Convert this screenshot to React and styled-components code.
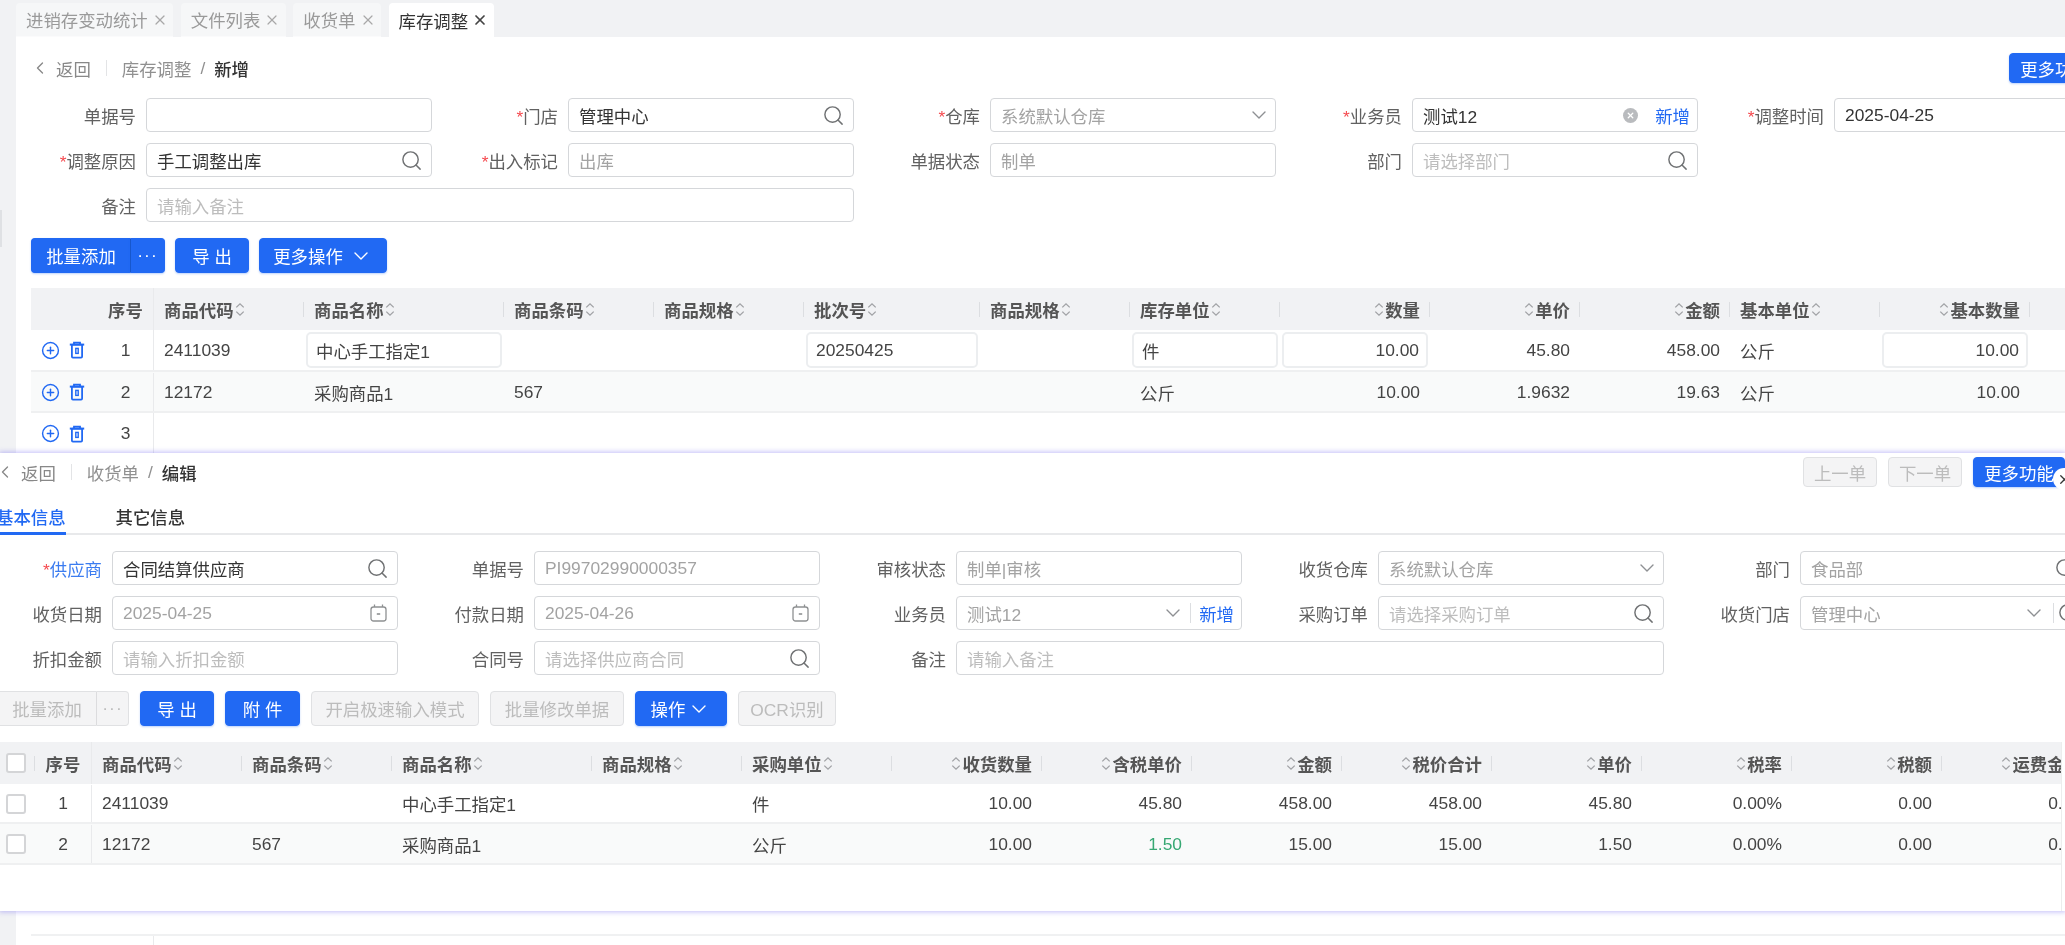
import styled, { createGlobalStyle } from 'styled-components'
import { ChevronLeft, ChevronDown, CirclePlus, Search, X } from 'lucide-react'

const BLUE = '#2169f3'

const Global = createGlobalStyle`
  html, body { margin: 0; padding: 0; height: 100%; overflow: hidden; background: #f1f2f4; }
  * { box-sizing: border-box; }
  body {
    font-family: "Liberation Sans", "Noto Sans CJK SC", sans-serif;
    font-size: 17.4px;
    color: #444;
  }
`

const Page = styled.div`
  position: relative;
  width: 2065px;
  height: 945px;
  overflow: hidden;
  background: #f1f2f4;
  filter: blur(0.4px);
`
const SideHandle = styled.div`
  position: absolute;
  left: 0;
  top: 210px;
  width: 2px;
  height: 37px;
  background: #dfe1e4;
`
const TabBar = styled.div`
  height: 37px;
  padding: 3px 0 0 16px;
  display: flex;
  gap: 7.5px;
`
const Tab = styled.div`
  height: 34px;
  padding: 0 5.5px 0 10px;
  display: flex;
  align-items: center;
  gap: 4px;
  border-radius: 4px 4px 0 0;
  white-space: nowrap;
  background: ${p => (p.$active ? '#fff' : '#f6f7f8')};
  border-bottom: ${p => (p.$active ? 'none' : '1px solid #fbfbfc')};
  color: ${p => (p.$active ? '#333' : '#9a9a9a')};
`
const Main = styled.div`
  margin-left: 16px;
  height: 908px;
  padding-top: 16px;
  background: #fff;
  overflow: hidden;
`
const Head = styled.div`
  height: 30px;
  display: flex;
  align-items: center;
  margin-left: ${p => p.$left}px;
  margin-right: ${p => p.$right || 0}px;
`
const Back = styled.span`
  margin-left: 6px;
  color: #888;
`
const HeadLine = styled.i`
  width: 1px;
  height: 16px;
  margin: 0 15px;
  background: #e3e4e6;
`
const Crumb = styled.span`
  color: ${p => (p.$now ? '#333' : '#909090')};
  font-weight: ${p => (p.$now ? 500 : 400)};
`
const Slash = styled.span`
  margin: 0 9px;
  color: #909090;
`
const HeadActions = styled.div`
  margin-left: auto;
  display: flex;
  gap: 11px;
  flex-shrink: 0;
`
const Form = styled.div`
  display: grid;
  grid-template-columns: repeat(5, 422px);
  row-gap: 11px;
  margin-top: ${p => p.$top}px;
  margin-left: ${p => p.$left}px;
`
const FieldWrap = styled.div`
  display: flex;
  align-items: center;
  grid-column: span ${p => p.$span || 1};
`
const Label = styled.div`
  width: 120px;
  margin-right: 10px;
  text-align: right;
  white-space: nowrap;
  color: ${p => (p.$blue ? '#3b7cf0' : '#616161')};
`
const Star = styled.span`
  color: #f5484d;
`
const Box = styled.div`
  width: ${p => (p.$span === 2 ? 708 : 286)}px;
  height: 34px;
  padding: 0 10px;
  display: flex;
  align-items: center;
  gap: 8px;
  background: #fff;
  border: 1px solid #d5d7da;
  border-radius: 4px;
  flex-shrink: 0;
`
const Val = styled.span`
  flex: 1;
  white-space: nowrap;
  overflow: hidden;
  color: ${p => (p.$tone === 'ph' ? '#bdbdbd' : p.$tone === 'muted' ? '#a3a3a3' : '#333')};
`
const AddLink = styled.span`
  margin-right: -3px;
  color: ${BLUE};
  white-space: nowrap;
`
const BoxLine = styled.i`
  width: 1px;
  height: 20px;
  flex-shrink: 0;
  background: #dcdee1;
`
const ClearDot = styled.span`
  width: 15px;
  height: 15px;
  margin-right: 9px;
  border-radius: 50%;
  background: #b9bbbe;
  display: flex;
  align-items: center;
  justify-content: center;
  color: #fff;
`
const Buttons = styled.div`
  display: flex;
  gap: ${p => p.$gap}px;
  margin-top: 16px;
  margin-left: ${p => p.$left}px;
`
const Btn = styled.div`
  width: ${p => p.$w}px;
  height: ${p => p.$h || 35}px;
  display: flex;
  align-items: center;
  justify-content: center;
  gap: ${p => p.$iconGap || 0}px;
  white-space: pre;
  flex-shrink: 0;
  border-radius: 4px;
  background: ${p => (p.$off ? '#f4f4f5' : BLUE)};
  color: ${p => (p.$off ? '#bcbcbc' : '#fff')};
  border: 1px solid ${p => (p.$off ? '#e0e1e3' : BLUE)};
  box-shadow: ${p => (p.$off ? 'none' : '0 1px 2px rgba(33,105,243,.3)')};
`
const Split = styled.div`
  display: flex;
  ${Btn}:first-child { border-radius: 4px 0 0 4px; border-right: none; }
  ${Btn}:last-child {
    border-radius: 0 4px 4px 0;
    letter-spacing: 1px;
    border-left: 1px solid ${p => (p.$off ? '#dcdcde' : '#1757cc')};
  }
`
const TableWrap = styled.div`
  margin-top: ${p => p.$top}px;
  margin-left: ${p => p.$left}px;
  height: ${p => p.$h}px;
  width: ${p => p.$w}px;
  overflow: hidden;
  border-right: ${p => (p.$edge ? '1px solid #eceded' : 'none')};
`
const HeadRow = styled.div`
  display: grid;
  grid-template-columns: ${p => p.$cols};
  height: 42px;
  background: #f1f2f4;
`
const Th = styled.div`
  position: relative;
  display: flex;
  align-items: center;
  justify-content: ${p => (p.$align === 'right' ? 'flex-end' : p.$align === 'center' ? 'center' : 'flex-start')};
  padding: ${p => (p.$align === 'center' ? '0' : '0 10px')};
  gap: 1px;
  font-weight: 600;
  color: #555;
  white-space: nowrap;
  border-right: ${p => (p.$solid ? '1px solid #e9eaec' : 'none')};
  &::after {
    content: '';
    display: ${p => (p.$tick ? 'block' : 'none')};
    position: absolute;
    right: 0;
    top: 14px;
    height: 15px;
    width: 1px;
    background: #dcdee1;
  }
`
const Row = styled.div`
  display: grid;
  grid-template-columns: ${p => p.$cols};
  height: ${p => p.$h}px;
  padding-top: ${p => (p.$shift ? 1 : 0)}px;
  background: ${p => (p.$stripe ? '#f9fafa' : '#fff')};
  border-bottom: ${p => (p.$open ? 'none' : '2px solid #eff0f1')};
`
const Td = styled.div`
  display: flex;
  align-items: center;
  justify-content: ${p => (p.$align === 'right' ? 'flex-end' : p.$align === 'center' ? 'center' : 'flex-start')};
  padding: ${p => (p.$align === 'center' ? '0' : '0 10px')};
  white-space: nowrap;
  color: ${p => p.$color || '#444'};
  border-right: ${p => (p.$solid ? '1px solid #e9eaec' : 'none')};
`
const ActionCell = styled.div`
  display: flex;
  align-items: center;
  gap: 8px;
  padding-left: 10px;
`
const CellInput = styled.div`
  width: calc(100% + 16px);
  margin: 0 -8px;
  height: 36px;
  padding: 0 8px;
  display: flex;
  align-items: center;
  justify-content: ${p => (p.$align === 'right' ? 'flex-end' : 'flex-start')};
  padding-right: ${p => (p.$align === 'right' ? '7px' : '8px')};
  border: 2px solid #eceef0;
  border-radius: 5px;
  background: #fff;
  color: #444;
`
const Check = styled.span`
  width: 20px;
  height: 20px;
  margin-left: -3px;
  border: 2px solid #d4d5d7;
  border-radius: 3px;
  background: #fff;
`
const Overlay = styled.div`
  position: absolute;
  left: 0;
  top: 453px;
  width: 2065px;
  height: 458px;
  padding-top: 4px;
  background: #fff;
  box-shadow: 0 0 5px 1px rgba(120, 108, 240, .45);
`
const OverlayInner = styled.div`
  width: 2065px;
  height: 454px;
  overflow: hidden;
`
const CloseDot = styled.div`
  position: absolute;
  left: 2053px;
  top: 15px;
  width: 22px;
  height: 22px;
  border-radius: 50%;
  background: #fff;
  display: flex;
  align-items: center;
  justify-content: center;
  color: #333;
`
const SubTabs = styled.div`
  display: flex;
  gap: 50px;
  height: 48px;
  margin-left: -4px;
  align-items: flex-end;
  border-bottom: 2px solid #e8e9eb;
`
const SubTab = styled.div`
  height: 34px;
  padding-top: 3px;
  margin-bottom: -2px;
  border-bottom: 3px solid ${p => (p.$active ? BLUE : 'transparent')};
  color: ${p => (p.$active ? BLUE : '#333')};
  font-weight: 500;
  white-space: nowrap;
`
const LowerRow = styled.div`
  margin-top: 480px;
  margin-left: 15px;
  height: 12px;
  border-top: 2px solid #f0f1f2;
  display: flex;
`
const LowerCell = styled.div`
  width: 123px;
  border-right: 1px solid #e9eaec;
`
const SearchGlyph = styled(Search)`
  flex-shrink: 0;
  margin-left: ${p => p.$ml || 0}px;
  margin-right: ${p => p.$mr ?? -2}px;
`
const ArrowGlyph = styled(ChevronDown)`
  flex-shrink: 0;
  margin-right: ${p => p.$mr ?? -6}px;
`

const SortIcon = () => (
  <svg width="10" height="15" viewBox="0 0 10 15" fill="none" stroke="#a0a2a5" strokeWidth="1.3">
    <path d="M1.3 5.4 5 1.8 8.7 5.4" />
    <path d="M1.3 9.6 5 13.2 8.7 9.6" />
  </svg>
)

const TrashIcon = () => (
  <svg width="18" height="18" viewBox="0 0 18 18" fill="none" stroke={BLUE} strokeWidth="1.8">
    <path d="M6 3.4V1.6h6v1.8" />
    <path d="M1.8 3.6h14.4" strokeWidth="2" />
    <rect x="3.9" y="3.6" width="10.2" height="13" rx="1" />
    <rect x="7.8" y="7.4" width="2.4" height="5" strokeWidth="1.4" />
  </svg>
)

const CalendarIcon = () => (
  <svg width="17" height="18" viewBox="0 0 17 18" fill="none" stroke="#8f9193" strokeWidth="1.3">
    <rect x="1" y="3" width="15" height="14" rx="2.5" />
    <path d="M4.5 0.5V3M12.5 0.5V3" />
    <path d="M6.8 10h3.4" strokeWidth="1.6" />
  </svg>
)

const SearchIcon = props => <SearchGlyph size={23} strokeWidth={1.5} color="#6f7173" {...props} />
const Arrow = props => <ArrowGlyph size={24} strokeWidth={1.4} color="#8e9093" {...props} />

const Field = ({ label, required, blue, value, tone, span, children }) => (
  <FieldWrap $span={span}>
    <Label $blue={blue}>
      {required && <Star>*</Star>}
      {label}
    </Label>
    <Box $span={span}>
      <Val $tone={tone}>{value}</Val>
      {children}
    </Box>
  </FieldWrap>
)

const Sorted = ({ title, right }) => (
  <>
    {right && <SortIcon />}
    {title}
    {!right && <SortIcon />}
  </>
)

const toCols = list => list.map(w => `${w}px`).join(' ')

const stockWidths = [67, 56, 150, 200, 150, 150, 176, 150, 150, 150, 150, 150, 150, 150, 150]
const stockHead = [
  ['商品代码'], ['商品名称'], ['商品条码'], ['商品规格'], ['批次号'], ['商品规格'], ['库存单位'],
  ['数量', 1], ['单价', 1], ['金额', 1], ['基本单位'], ['基本数量', 1],
]
const stockRows = [
  ['1', '2411039', { input: '中心手工指定1' }, '', '', { input: '20250425' }, '', { input: '件' },
    { input: '10.00', right: 1 }, { text: '45.80', right: 1 }, { text: '458.00', right: 1 }, '公斤', { input: '10.00', right: 1 }],
  ['2', '12172', '采购商品1', '567', '', '', '', '公斤',
    { text: '10.00', right: 1 }, { text: '1.9632', right: 1 }, { text: '19.63', right: 1 }, '公斤', { text: '10.00', right: 1 }],
]

const receiveWidths = [35, 57, 150, 150, 200, 150, 150, 150, 150, 150, 150, 150, 150, 150, 150]
const receiveHead = [
  ['商品代码'], ['商品条码'], ['商品名称'], ['商品规格'], ['采购单位'],
  ['收货数量', 1], ['含税单价', 1], ['金额', 1], ['税价合计', 1], ['单价', 1], ['税率', 1], ['税额', 1], ['运费金额', 1],
]
const receiveRows = [
  ['1', '2411039', '', '中心手工指定1', '', '件', '10.00', '45.80', '458.00', '458.00', '45.80', '0.00%', '0.00', '0.00'],
  ['2', '12172', '567', '采购商品1', '', '公斤', '10.00', '1.50', '15.00', '15.00', '1.50', '0.00%', '0.00', '0.00'],
]

const StockTable = () => {
  const cols = toCols(stockWidths)
  return (
    <TableWrap $top={15} $left={15} $w={2034} $h={166}>
      <HeadRow $cols={cols}>
        <Th />
        <Th $align="center" $solid>序号</Th>
        {stockHead.map(([title, right], i) => (
          <Th key={i} $align={right ? 'right' : 'left'} $tick>
            <Sorted title={title} right={right} />
          </Th>
        ))}
        <Th />
      </HeadRow>
      {[...stockRows, ['3']].map((row, r) => (
        <Row key={r} $cols={cols} $h={r === 0 ? 42 : 41} $stripe={r === 1} $open={r === 2} $shift={r === 1}>
          <ActionCell>
            <CirclePlus size={19} strokeWidth={1.8} color={BLUE} />
            <TrashIcon />
          </ActionCell>
          <Td $align="center" $solid>{row[0]}</Td>
          {row.slice(1).map((cell, i) => {
            if (cell && cell.input) {
              return (
                <Td key={i} $align={cell.right ? 'right' : 'left'}>
                  <CellInput $align={cell.right ? 'right' : 'left'}>{cell.input}</CellInput>
                </Td>
              )
            }
            if (cell && cell.text) return <Td key={i} $align="right">{cell.text}</Td>
            return <Td key={i}>{cell}</Td>
          })}
        </Row>
      ))}
    </TableWrap>
  )
}

const ReceiveTable = () => {
  const cols = toCols(receiveWidths)
  return (
    <TableWrap $top={16} $left={0} $w={2062} $h={170} $edge>
      <HeadRow $cols={cols}>
        <Th $align="center" $tick><Check /></Th>
        <Th $align="center" $solid>序号</Th>
        {receiveHead.map(([title, right], i) => (
          <Th key={i} $align={right ? 'right' : 'left'} $tick>
            <Sorted title={title} right={right} />
          </Th>
        ))}
      </HeadRow>
      {receiveRows.map((row, r) => (
        <Row key={r} $cols={cols} $h={r === 0 ? 40 : 41} $stripe={r === 1} $shift>
          <Td $align="center"><Check /></Td>
          <Td $align="center" $solid>{row[0]}</Td>
          {row.slice(1).map((cell, i) => (
            <Td
              key={i}
              $align={i >= 5 ? 'right' : 'left'}
              $color={r === 1 && i === 6 ? '#37a873' : undefined}
            >
              {cell}
            </Td>
          ))}
        </Row>
      ))}
    </TableWrap>
  )
}

const App = () => (
  <Page>
    <Global />
    <SideHandle />
    <TabBar>
      <Tab>进销存变动统计<X size={16} strokeWidth={1.8} color="#a8a8a8" /></Tab>
      <Tab>文件列表<X size={16} strokeWidth={1.8} color="#a8a8a8" /></Tab>
      <Tab>收货单<X size={16} strokeWidth={1.8} color="#a8a8a8" /></Tab>
      <Tab $active>库存调整<X size={16} strokeWidth={2.6} color="#444" /></Tab>
    </TabBar>

    <Main>
      <Head $left={14} $right={-36}>
        <ChevronLeft size={20} strokeWidth={1.6} color="#888" />
        <Back>返回</Back>
        <HeadLine />
        <Crumb>库存调整</Crumb>
        <Slash>/</Slash>
        <Crumb $now>新增</Crumb>
        <HeadActions>
          <Btn $w={92} $h={30}>更多功能</Btn>
        </HeadActions>
      </Head>

      <Form $top={15} $left={0}>
        <Field label="单据号" />
        <Field label="门店" required value="管理中心"><SearchIcon /></Field>
        <Field label="仓库" required value="系统默认仓库" tone="muted"><Arrow /></Field>
        <Field label="业务员" required value="测试12">
          <ClearDot><X size={9} strokeWidth={3.5} /></ClearDot>
          <AddLink>新增</AddLink>
        </Field>
        <Field label="调整时间" required value="2025-04-25" />
        <Field label="调整原因" required value="手工调整出库"><SearchIcon /></Field>
        <Field label="出入标记" required value="出库" tone="muted" />
        <Field label="单据状态" value="制单" tone="muted" />
        <Field label="部门" value="请选择部门" tone="ph"><SearchIcon /></Field>
        <Field label="备注" value="请输入备注" tone="ph" span={2} />
      </Form>

      <Buttons $gap={10} $left={15}>
        <Split>
          <Btn $w={99}>批量添加</Btn>
          <Btn $w={35}>···</Btn>
        </Split>
        <Btn $w={74}>导 出</Btn>
        <Btn $w={128} $iconGap={6}>更多操作<ChevronDown size={24} strokeWidth={1.4} /></Btn>
      </Buttons>

      <StockTable />
      <LowerRow><LowerCell /></LowerRow>
    </Main>

    <Overlay>
      <OverlayInner>
        <Head $left={-5}>
          <ChevronLeft size={20} strokeWidth={1.6} color="#888" />
          <Back>返回</Back>
          <HeadLine />
          <Crumb>收货单</Crumb>
          <Slash>/</Slash>
          <Crumb $now>编辑</Crumb>
          <HeadActions>
            <Btn $w={74} $h={30} $off>上一单</Btn>
            <Btn $w={74} $h={30} $off>下一单</Btn>
            <Btn $w={92} $h={30}>更多功能</Btn>
          </HeadActions>
        </Head>

        <SubTabs>
          <SubTab $active>基本信息</SubTab>
          <SubTab>其它信息</SubTab>
        </SubTabs>

        <Form $top={16} $left={-18}>
          <Field label="供应商" required blue value="合同结算供应商"><SearchIcon /></Field>
          <Field label="单据号" value="PI99702990000357" tone="muted" />
          <Field label="审核状态" value="制单|审核" tone="muted" />
          <Field label="收货仓库" value="系统默认仓库" tone="muted"><Arrow /></Field>
          <Field label="部门" value="食品部" tone="muted"><SearchIcon /></Field>
          <Field label="收货日期" value="2025-04-25" tone="muted"><CalendarIcon /></Field>
          <Field label="付款日期" value="2025-04-26" tone="muted"><CalendarIcon /></Field>
          <Field label="业务员" value="测试12" tone="muted">
            <Arrow $mr={-3} />
            <BoxLine />
            <AddLink>新增</AddLink>
          </Field>
          <Field label="采购订单" value="请选择采购订单" tone="ph"><SearchIcon /></Field>
          <Field label="收货门店" value="管理中心" tone="muted">
            <Arrow $mr={-1} />
            <BoxLine />
            <SearchIcon $ml={-5} $mr={-5} />
          </Field>
          <Field label="折扣金额" value="请输入折扣金额" tone="ph" />
          <Field label="合同号" value="请选择供应商合同" tone="ph"><SearchIcon /></Field>
          <Field label="备注" value="请输入备注" tone="ph" span={2} />
        </Form>

        <Buttons $gap={11} $left={-3}>
          <Split $off>
            <Btn $w={99} $off>批量添加</Btn>
            <Btn $w={33} $off>···</Btn>
          </Split>
          <Btn $w={74}>导 出</Btn>
          <Btn $w={75}>附 件</Btn>
          <Btn $w={168} $off>开启极速输入模式</Btn>
          <Btn $w={134} $off>批量修改单据</Btn>
          <Btn $w={92} $iconGap={2}>操作<ChevronDown size={24} strokeWidth={1.4} /></Btn>
          <Btn $w={98} $off>OCR识别</Btn>
        </Buttons>

        <ReceiveTable />
      </OverlayInner>
      <CloseDot><X size={15} strokeWidth={2} /></CloseDot>
    </Overlay>
  </Page>
)

export default App
